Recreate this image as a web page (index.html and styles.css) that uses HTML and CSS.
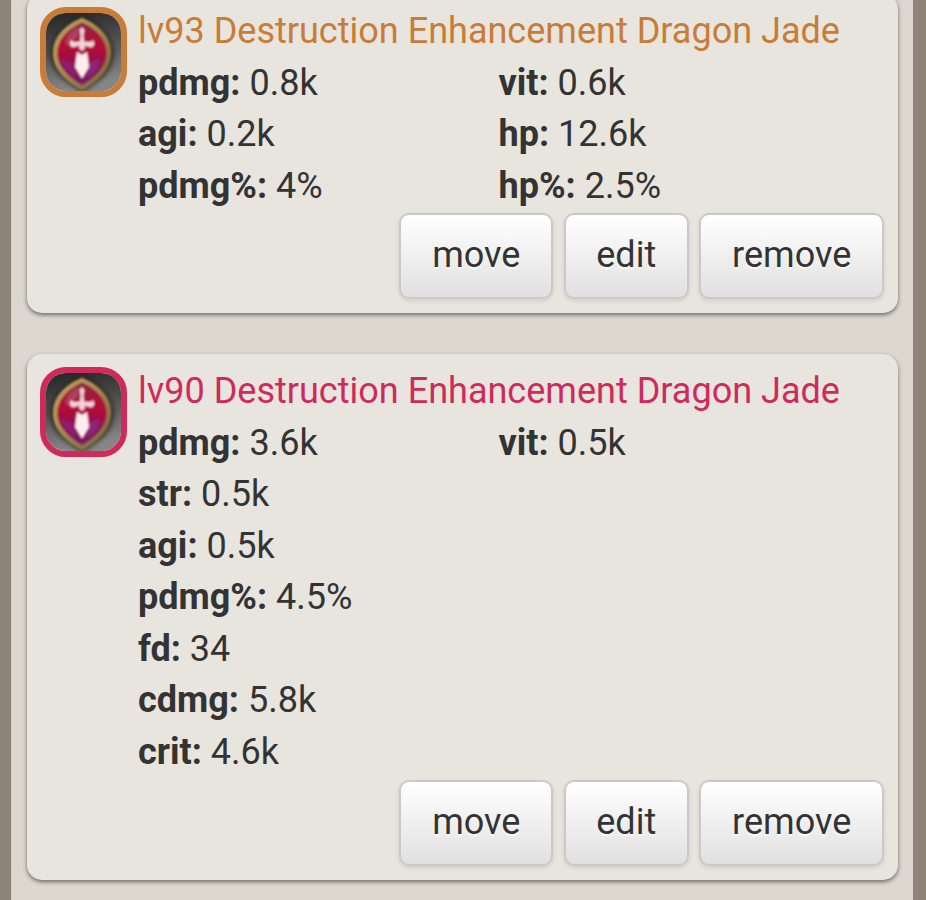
FILE: index.html
```
<!DOCTYPE html>
<html lang="en">
<head>
    <meta charset="UTF-8">
    <meta name="viewport" content="width=device-width, initial-scale=1.0">
    <title>Items</title>
    <link rel="stylesheet" href="styles.css">
</head>
<body>
    <svg width="0" height="0" class="defs">
        <defs>
            <linearGradient id="back" x1="0" y1="0" x2="0.2" y2="1">
                <stop offset="0" stop-color="#242424"/>
                <stop offset="0.5" stop-color="#505050"/>
                <stop offset="1" stop-color="#868686"/>
            </linearGradient>
            <linearGradient id="gold" x1="0" y1="0" x2="1" y2="1">
                <stop offset="0" stop-color="#c3a35d"/>
                <stop offset="0.5" stop-color="#a88a50"/>
                <stop offset="1" stop-color="#7a6038"/>
            </linearGradient>
            <linearGradient id="gem" x1="0" y1="0" x2="0" y2="1">
                <stop offset="0" stop-color="#8d2a45"/>
                <stop offset="0.4" stop-color="#b50a35"/>
                <stop offset="0.65" stop-color="#94134f"/>
                <stop offset="1" stop-color="#721c68"/>
            </linearGradient>
            <filter id="soft"><feGaussianBlur stdDeviation="0.8"/></filter>
            <filter id="dark"><feGaussianBlur stdDeviation="2"/></filter>
            <symbol id="jade" viewBox="0 0 75 78">
                <rect width="75" height="78" fill="url(#back)"/>
                <path d="M36 2C51 9 68 24 68 41C68 58 51 71 36 79C21 71 4 58 4 41C4 24 21 9 36 2Z" fill="#1d1a16" opacity="0.7" filter="url(#dark)"/>
                <g filter="url(#soft)">
                    <path d="M36 7C50 13 63 24 63 40C63 56 50 67 36 75C22 67 9 56 9 40C9 24 22 13 36 7Z" fill="url(#gem)" stroke="url(#gold)" stroke-width="4.5"/>
                    <path d="M19 29C22 21 27 16 33 14L32 24L21 33Z" fill="#b77a8c" opacity="0.4"/>
                    <path d="M43 50L53 46C53 55 48 61 41 65Z" fill="#8934a0" opacity="0.55"/>
                    <path d="M15 46L27 50L30 64C22 59 17 53 15 46Z" fill="#8b2a93" opacity="0.5"/>
                    <path d="M36 14L38.500 17L37.500 22L38 28.500L45 29L47 27L48.500 31L46 34.500L38.500 32.500L39 35L36 38L33 35L33.500 32.500L26 34.500L23.500 31L25 27L28 29L34 28.500L34.500 22L33.500 17Z" fill="#f1d5dc"/>
                    <path d="M31 39L36 42L41 39L43 54L36 65.500L29 54Z" fill="#ffeef0"/>
                </g>
            </symbol>
        </defs>
    </svg>

    <div class="container">
        <div class="item">
            <svg class="icon legendary"><use href="#jade"/></svg>
            <div class="details">
                <div class="title legendary">lv93 Destruction Enhancement Dragon Jade</div>
                <div class="stats">
                    <div class="column">
                        <div><strong>pdmg:</strong> 0.8k</div>
                        <div><strong>agi:</strong> 0.2k</div>
                        <div><strong>pdmg%:</strong> 4%</div>
                    </div>
                    <div class="column">
                        <div><strong>vit:</strong> 0.6k</div>
                        <div><strong>hp:</strong> 12.6k</div>
                        <div><strong>hp%:</strong> 2.5%</div>
                    </div>
                </div>
                <div class="actions">
                    <button class="btn">move</button>
                    <button class="btn">edit</button>
                    <button class="btn">remove</button>
                </div>
            </div>
        </div>

        <div class="item">
            <svg class="icon ancient"><use href="#jade"/></svg>
            <div class="details">
                <div class="title ancient">lv90 Destruction Enhancement Dragon Jade</div>
                <div class="stats">
                    <div class="column">
                        <div><strong>pdmg:</strong> 3.6k</div>
                        <div><strong>str:</strong> 0.5k</div>
                        <div><strong>agi:</strong> 0.5k</div>
                        <div><strong>pdmg%:</strong> 4.5%</div>
                        <div><strong>fd:</strong> 34</div>
                        <div><strong>cdmg:</strong> 5.8k</div>
                        <div><strong>crit:</strong> 4.6k</div>
                    </div>
                    <div class="column">
                        <div><strong>vit:</strong> 0.5k</div>
                    </div>
                </div>
                <div class="actions">
                    <button class="btn">move</button>
                    <button class="btn">edit</button>
                    <button class="btn">remove</button>
                </div>
            </div>
        </div>
    </div>
</body>
</html>
```

FILE: styles.css
```
* {
    box-sizing: border-box;
}

body {
    margin: 0;
    height: 900px;
    overflow: hidden;
    background: #8d8477;
    color: #333;
    font-family: Roboto, "Liberation Sans", sans-serif;
    font-size: 36.04px;
    line-height: 51.55px;
}

.defs {
    display: block;
}

.container {
    display: flow-root;
    height: 900px;
    margin: 0 13px 0 11px;
    padding: 0 15px 0 16px;
    background: #dcd8d0;
    border-left: 1px solid #d0ccc2;
}

.item {
    display: flex;
    height: 319px;
    margin: -6px 0 41px -1px;
    padding: 13px 14px 14px 13px;
    background: #e8e5de;
    border-radius: 15px;
    box-shadow: 0 2px 4px rgba(0, 0, 0, 0.5);
}

.item + .item {
    height: 526px;
    margin-top: 0;
}

.icon {
    flex: none;
    width: 87px;
    height: 90px;
    border: 6px solid;
    border-radius: 26px;
}

.details {
    flex: 1;
    display: flex;
    flex-direction: column;
    margin: -1px 0 0 11px;
}

.title {
    white-space: nowrap;
}

.legendary {
    color: #c97c37;
}

.ancient {
    color: #cf2a5b;
}

.stats {
    display: flex;
}

.column {
    width: 360.5px;
}

.actions {
    display: flex;
    justify-content: flex-end;
    gap: 10.5px;
    margin-top: auto;
}

.btn {
    height: 86px;
    padding: 0 30.7px 1px;
    border: 2px solid #c9c9c9;
    border-radius: 10px;
    background: linear-gradient(#fff, #e0e0e0);
    box-shadow: 0 2px 4px rgba(0, 0, 0, 0.1);
    color: #333;
    font: inherit;
    text-shadow: 0 2px 2px rgba(255, 255, 255, 0.75);
}
```
